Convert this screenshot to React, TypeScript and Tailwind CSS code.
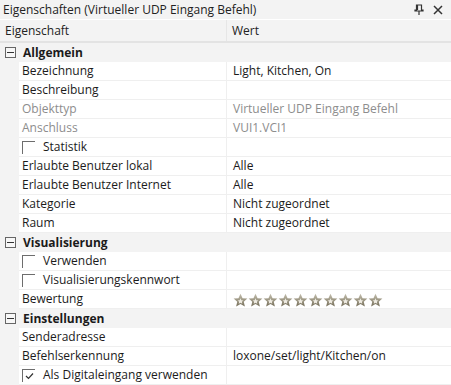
import React from "react";

type Row =
  | { kind: "cat"; label: string }
  | { kind: "prop"; label: string; value?: string; disabled?: boolean; check?: boolean; checked?: boolean; stars?: boolean };

const rows: Row[] = [
  { kind: "cat", label: "Allgemein" },
  { kind: "prop", label: "Bezeichnung", value: "Light, Kitchen, On" },
  { kind: "prop", label: "Beschreibung" },
  { kind: "prop", label: "Objekttyp", value: "Virtueller UDP Eingang Befehl", disabled: true },
  { kind: "prop", label: "Anschluss", value: "VUI1.VCI1", disabled: true },
  { kind: "prop", label: "Statistik", check: true },
  { kind: "prop", label: "Erlaubte Benutzer lokal", value: "Alle" },
  { kind: "prop", label: "Erlaubte Benutzer Internet", value: "Alle" },
  { kind: "prop", label: "Kategorie", value: "Nicht zugeordnet" },
  { kind: "prop", label: "Raum", value: "Nicht zugeordnet" },
  { kind: "cat", label: "Visualisierung" },
  { kind: "prop", label: "Verwenden", check: true },
  { kind: "prop", label: "Visualisierungskennwort", check: true },
  { kind: "prop", label: "Bewertung", stars: true },
  { kind: "cat", label: "Einstellungen" },
  { kind: "prop", label: "Senderadresse" },
  { kind: "prop", label: "Befehlserkennung", value: "loxone/set/light/Kitchen/on" },
  { kind: "prop", label: "Als Digitaleingang verwenden", check: true, checked: true },
];

// outlined star, pale inside, darker toward the bottom
const Star = () => (
  <svg width="15" height="15" viewBox="0 0 24 24">
    <defs>
      <linearGradient id="sg" x1="0" y1="0" x2="0" y2="1">
        <stop offset="0" stopColor="#c4bfae" />
        <stop offset="1" stopColor="#756e59" />
      </linearGradient>
    </defs>
    <path
      d="M12 1l3.3 7.2 7.7.7-5.8 5.1 1.8 7.6L12 17.6l-7 4 1.8-7.6L1 8.9l7.7-.7z"
      fill="url(#sg)"
    />
    <path
      d="M12 8.5l1.4 3 3.2.3-2.4 2.2.7 3.2L12 15.5l-2.9 1.7.7-3.2-2.4-2.2 3.2-.3z"
      fill="#efece3"
    />
  </svg>
);

const CheckBox = ({ checked }: { checked?: boolean }) => (
  <div className="w-[13px] h-[13px] border-t border-l border-[#6d6d6d] relative mr-[8px] mt-[1px]">
    {checked && (
      <svg className="absolute left-[2px] top-[2px]" width="9" height="8" viewBox="0 0 9 8">
        <path d="M1 4l2.5 2.5L8 1.5" fill="none" stroke="#333" strokeWidth="1.2" />
      </svg>
    )}
  </div>
);

const MinusBox = () => (
  <div className="w-[11px] h-[11px] border border-[#666] flex items-center justify-center bg-[#f7f7f7]">
    <div className="w-[7px] h-px bg-[#333]" />
  </div>
);

export default function App() {
  return (
    <div
      className="w-[451px] h-[385px] bg-[#f3f3f3] text-[12px] text-[#1b1b1b] overflow-hidden"
      style={{ fontFamily: '"Open Sans", "Noto Sans", sans-serif' }}
    >
      {/* Title */}
      <div className="h-[20px] flex items-center pl-[3px] pr-[8px] border-b border-white">
        <span className="flex-1 text-[#222]">Eigenschaften (Virtueller UDP Eingang Befehl)</span>
        <svg width="10" height="11" viewBox="0 0 10 11" className="mr-[9px]">
          <path d="M2.5 1h5v5h1.5v1H1v-1h1.5zM3.5 1v5M5 7v4" fill="none" stroke="#333" strokeWidth="1.2" />
        </svg>
        <svg width="10" height="10" viewBox="0 0 10 10">
          <path d="M1 1l8 8M9 1l-8 8" stroke="#333" strokeWidth="1.5" />
        </svg>
      </div>

      {/* Header */}
      <div className="h-[23px] flex border-b-2 border-[#e3e3e3] text-[#222]">
        <div className="w-[227px] pl-[5px] flex items-center border-r border-[#e6e6e6]">Eigenschaft</div>
        <div className="flex-1 pl-[5px] flex items-center">Wert</div>
      </div>

      {/* Rows */}
      {rows.map((r, i) =>
        r.kind === "cat" ? (
          <div key={i} className="h-[19px] flex items-center">
            <div className="w-[19px] flex justify-center pl-[1px]">
              <MinusBox />
            </div>
            <span className="pl-[4px] font-bold">{r.label}</span>
          </div>
        ) : (
          <div key={i} className="h-[19px] flex">
            <div className="w-[19px]" />
            <div className="flex-1 flex bg-white border-b border-[#efefef]">
              <div
                className={`w-[208px] pl-[3px] flex items-center border-r border-[#efefef] ${
                  r.disabled ? "text-[#8d8d8d]" : ""
                }`}
              >
                {r.check && <CheckBox checked={r.checked} />}
                {r.label}
              </div>
              <div className={`flex-1 pl-[6px] flex items-center ${r.disabled ? "text-[#8d8d8d]" : ""}`}>
                {r.stars ? (
                  <div className="flex pt-[2px]">
                    {Array.from({ length: 10 }).map((_, k) => (
                      <Star key={k} />
                    ))}
                  </div>
                ) : (
                  r.value
                )}
              </div>
            </div>
          </div>
        )
      )}
    </div>
  );
}
